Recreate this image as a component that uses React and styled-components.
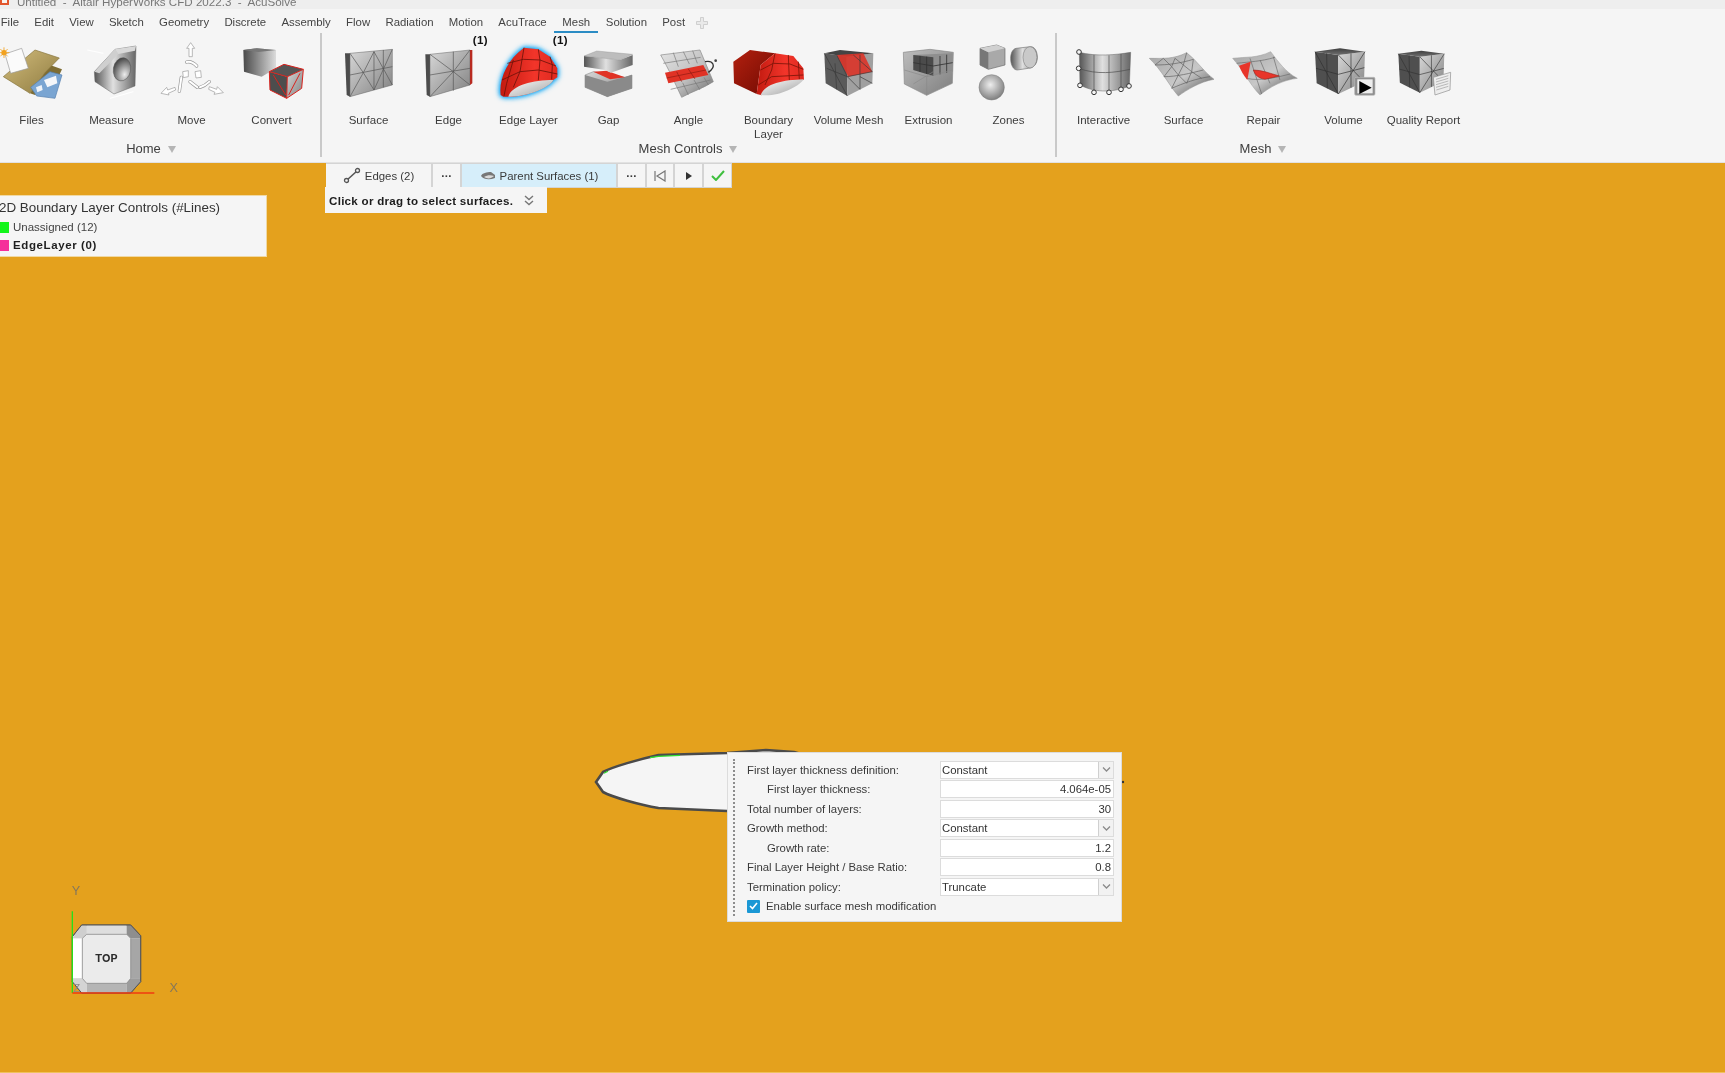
import React from 'react';
import styled, { createGlobalStyle } from 'styled-components';

const Global = createGlobalStyle`
  html, body { margin: 0; padding: 0; background: #f5f5f5; }
  body { font-family: "Liberation Sans", Arial, sans-serif; overflow: hidden; }
`;

const Page = styled.div`
  width: 1725px; height: 1073px; display: flex; flex-direction: column; overflow: hidden;
  filter: blur(0.45px);
`;
const TitleBar = styled.div`
  height: 9px; flex: none; background: #eeeeee; display: flex; align-items: flex-end; gap: 8px; overflow: hidden; color: #777;
  font-size: 11.6px; line-height: 14px;
`;
const TitleIcon = styled.span`
  width: 9px; height: 5px; flex: none; align-self: flex-start; background: #f8f2ee; border: 2px solid #e2562d; border-top: 0; box-sizing: border-box;
`;
const TitleText = styled.span` white-space: pre; `;
const MenuBar = styled.div`
  height: 24px; flex: none; display: flex; margin-left: -7px; background: #f5f5f5; color: #444; font-size: 11.4px;
`;
const MenuItem = styled.div`
  padding: 0 ${p => (p.$active ? 8 : 7.65)}px; height: 24px; box-sizing: border-box; line-height: 26px; white-space: nowrap;
  border-bottom: 2px solid ${p => (p.$active ? '#2b8cc4' : 'transparent')};
`;
const PlusIcon = styled.svg` width: 12px; height: 12px; margin: 8px 0 0 3px; `;
const Ribbon = styled.div`
  height: 130px; flex: none; box-sizing: border-box; background: #f5f5f5; display: flex; margin-left: -9px; border-bottom: 1px solid #e2e2e2;
`;
const Group = styled.div` display: flex; flex-direction: column; `;
const ToolRow = styled.div` display: flex; height: 105px; `;
const Tool = styled.div`
  position: relative; width: 80px; padding-top: 5px; box-sizing: border-box; display: flex; flex-direction: column; align-items: center;
`;
const IconSvg = styled.svg` width: 80px; height: 70px; display: block; overflow: visible; flex: none; `;
const ToolLabel = styled.div`
  margin-top: 5px; width: 80px; padding-left: 1px; box-sizing: border-box; text-align: center; font-size: 11.5px; line-height: 14px; color: #3c3c3c;
`;
const Badge = styled.div`
  position: absolute; top: 0; right: 0; font-size: 11.5px; font-weight: 700; line-height: 14px; color: #111; letter-spacing: .4px;
`;
const GroupLabel = styled.div`
  display: flex; justify-content: center; align-items: center; gap: 7px; height: 20px; font-size: 13px; color: #3d3d3d;
`;
const Tri = styled.span`
  width: 0; height: 0; border-left: 4.5px solid transparent; border-right: 4.5px solid transparent; border-top: 7px solid #b5b5b5; margin-top: 2px;
`;
const Sep = styled.div`
  width: 2px; height: 124px; background: #c9c9c9; flex: none; margin: 0 6px 0 ${p => p.$ml}px;
`;
const Canvas = styled.div`
  position: relative; flex: 1; background: #e4a11d; border-bottom: 1px solid #efc25e;
`;
const FlowBar = styled.div`
  position: absolute; left: 326px; top: 0; height: 24px; display: flex; gap: 2px; background: #d4d4d4; padding: 1px 1px 0 0;
`;
const FlowBtn = styled.div`
  width: ${p => p.$w}px; height: 23px; display: flex; align-items: center; justify-content: center; gap: ${p => p.$gap || 0}px;
  background: ${p => (p.$active ? '#d6eefa' : '#f5f5f5')}; color: #3a3a3a; font-size: 11.4px; white-space: nowrap;
`;
const Dots = styled.span` font-weight: 700; font-size: 11.5px; letter-spacing: .3px; line-height: 14px; margin-top: -5px; `;
const Hint = styled.div`
  position: absolute; left: 325px; top: 24px; width: 222px; height: 26px; box-sizing: border-box; padding-left: 4px; background: #f5f5f5;
  display: flex; align-items: center; gap: 11px; font-size: 11.6px; font-weight: 700; color: #1c1c1c; letter-spacing: .27px;
`;
const Legend = styled.div`
  position: absolute; left: 0; top: 32px; width: 267px; height: 62px; box-sizing: border-box; background: #f5f5f5; padding-top: 2px;
  color: #333; border: 1px solid #f0d9a4; border-left: 0;
`;
const LegendTitle = styled.div` font-size: 13.4px; line-height: 19px; margin-left: -1px; margin-bottom: 1px; white-space: nowrap; `;
const LegendRow = styled.div`
  display: flex; align-items: center; gap: 4px; height: 18px; font-size: 11.5px; font-weight: ${p => (p.$bold ? 700 : 400)}; color: ${p => (p.$bold ? '#1f1f1f' : '#444')};
  letter-spacing: ${p => (p.$bold ? '.6px' : '0')};
`;
const Swatch = styled.span` width: 9px; height: 11px; background: ${p => p.$c}; flex: none; `;
const Airfoil = styled.svg` position: absolute; left: 590px; top: 582px; width: 540px; height: 235px; `;
const Panel = styled.div`
  position: absolute; left: 727px; top: 589px; width: 395px; height: 170px; box-sizing: border-box; background: #f5f5f5; border: 1px solid #dcdcdc;
  padding: 7px 8px 0 19px; color: #3a3a3a; font-size: 11.35px;
`;
const Grip = styled.div`
  position: absolute; left: 5px; top: 6px; bottom: 5px; border-left: 2px dotted #8d8d8d;
`;
const FormGrid = styled.div`
  display: grid; grid-template-columns: 193px 174px; grid-auto-rows: 19.5px; align-items: center;
`;
const RowLabel = styled.div` padding-left: ${p => (p.$indent ? 20 : 0)}px; white-space: nowrap; `;
const Field = styled.div`
  height: 18px; box-sizing: border-box; background: #fff; border: 1px solid #dcdcdc; display: flex; align-items: center;
  justify-content: ${p => (p.$num ? 'flex-end' : 'space-between')}; padding: ${p => (p.$num ? '0 2px' : '0 0 0 1px')}; color: #333;
`;
const DropBtn = styled.div`
  width: 14px; height: 16px; background: #f2f2f2; border-left: 1px solid #d0d0d0; display: flex; align-items: center; justify-content: center;
`;
const CheckRow = styled.div` display: flex; align-items: center; gap: 6px; height: 19.5px; `;
const Check = styled.span`
  width: 13px; height: 13px; border-radius: 1px; background: #1b98d5; display: flex; align-items: center; justify-content: center;
`;
const NavCube = styled.svg` position: absolute; left: 40px; top: 707px; width: 160px; height: 130px; `;
const DefsSvg = styled.svg` position: absolute; width: 0; height: 0; `;
const GlowG = styled.g` filter: drop-shadow(0 0 8px #12a8f5) drop-shadow(0 0 7px #12a8f5); `;

const Defs = () => (
  <DefsSvg>
    <defs>
      <linearGradient id="hmetal" x1="0" y1="0" x2="1" y2="0"><stop offset="0" stopColor="#555555" /><stop offset=".45" stopColor="#e0e0e0" /><stop offset="1" stopColor="#666666" /></linearGradient>
      <linearGradient id="dark" x1="0" y1="0" x2="0" y2="1"><stop offset="0" stopColor="#3f3f3f" /><stop offset="1" stopColor="#707070" /></linearGradient>
      <linearGradient id="face" x1="0" y1="0" x2="1" y2="1"><stop offset="0" stopColor="#d8d8d8" /><stop offset="1" stopColor="#808080" /></linearGradient>
      <linearGradient id="box" x1="0" y1="0" x2="1" y2="1"><stop offset="0" stopColor="#bdbdbd" /><stop offset="1" stopColor="#7e7e7e" /></linearGradient>
      <linearGradient id="cube" x1="0" y1="0" x2="1" y2="0"><stop offset="0" stopColor="#4a4a4a" /><stop offset=".7" stopColor="#b0b0b0" /><stop offset="1" stopColor="#dcdcdc" /></linearGradient>
      <linearGradient id="red" x1="0" y1="0" x2="1" y2="0"><stop offset="0" stopColor="#c21a10" /><stop offset=".6" stopColor="#f2352a" /><stop offset="1" stopColor="#e02a20" /></linearGradient>
      <linearGradient id="dred" x1="0" y1="0" x2="1" y2="1"><stop offset="0" stopColor="#b3200f" /><stop offset="1" stopColor="#6f0a02" /></linearGradient>
      <linearGradient id="tan" x1="0" y1="0" x2="1" y2="1"><stop offset="0" stopColor="#d2bc7c" /><stop offset="1" stopColor="#8d7a3f" /></linearGradient>
      <linearGradient id="white" x1="0" y1="0" x2="1" y2="1"><stop offset="0" stopColor="#ffffff" /><stop offset="1" stopColor="#9e9e9e" /></linearGradient>
      <linearGradient id="sheet" x1="0" y1="0" x2="1" y2="1"><stop offset="0" stopColor="#e4e4e4" /><stop offset=".55" stopColor="#c0c0c0" /><stop offset="1" stopColor="#6a6a6a" /></linearGradient>
      <linearGradient id="wave" x1="0" y1="0" x2="1" y2="1"><stop offset="0" stopColor="#a6a6a6" /><stop offset=".55" stopColor="#c8c8c8" /><stop offset="1" stopColor="#4f4f4f" /></linearGradient>
      <radialGradient id="sphere" cx=".45" cy=".4" r=".7"><stop offset="0" stopColor="#eeeeee" /><stop offset="1" stopColor="#6d6d6d" /></radialGradient>
      <radialGradient id="hole" cx=".7" cy=".7" r=".8"><stop offset="0" stopColor="#ececec" /><stop offset="1" stopColor="#3a3a3a" /></radialGradient>
    </defs>
  </DefsSvg>
);

const Icon = ({ left, ox, oy, children }) => (
  <IconSvg viewBox={`${left} 38 80 70`}>
    <g transform={`translate(${ox} ${oy}) scale(.33333)`}>{children}</g>
  </IconSvg>
);

const L = ({ d, c = '#555', w = 2 }) => <path d={d} fill="none" stroke={c} strokeWidth={w} />;

const Files = () => (
  <Icon left={-9} ox={0} oy={30}>
    <path d="M90,190 L150,105 L186,118 L178,135 L105,195 Z" fill="#7f6d33" />
    <path d="M10,140 L105,60 L178,84 L135,128 L90,190 Z" fill="url(#tan)" stroke="#85733a" strokeWidth="2" />
    <path d="M92,172 L150,125 L186,135 L165,205 L110,198 Z" fill="#7aa5d2" stroke="#557fad" strokeWidth="2" />
    <path d="M132,150 L168,137 L172,160 L142,172 Z" fill="#f4f6f9" />
    <path d="M108,172 L125,165 L128,180 L112,187 Z" fill="#eef2f7" />
    <path d="M15,72 L65,55 L85,115 L32,130 Z" fill="#fbfbfb" stroke="#9a9a9a" strokeWidth="2" />
    <circle cx="12" cy="68" r="8" fill="#f2a11e" />
    <L d="M12,52 V84 M-4,68 H28 M1,57 L23,79 M23,57 L1,79" c="#f2a11e" w="2.5" />
  </Icon>
);
const Measure = () => (
  <Icon left={71} ox={0} oy={30}>
    <L d="M262,60 L310,70 M330,205 L400,185" c="#ffffff" w="3" />
    <path d="M283,125 L345,58 L408,48 L405,168 L342,192 L285,155 Z" fill="url(#hmetal)" stroke="#666" strokeWidth="1.5" />
    <path d="M345,58 L408,48 L405,62 L355,72 Z" fill="#d9d9d9" />
    <path d="M283,125 L345,58 L355,72 L298,130 Z" fill="#cfcfcf" />
    <ellipse cx="366" cy="118" rx="26" ry="35" fill="url(#hole)" stroke="#555" strokeWidth="1.5" transform="rotate(10 366 118)" />
  </Icon>
);
const Seg = ({ d }) => (
  <>
    <path d={d} fill="none" stroke="#9a9a9a" strokeWidth="10" strokeLinecap="round" />
    <path d={d} fill="none" stroke="#ffffff" strokeWidth="6" strokeLinecap="round" />
  </>
);
const Move = () => (
  <Icon left={151} ox={0} oy={30}>
    <path d="M572,38 L584,55 L577,55 L577,80 L567,80 L567,55 L560,55 Z" fill="#fff" stroke="#999" strokeWidth="2" />
    <path d="M483,190 L500,172 L503,180 L525,172 L527,180 L505,190 L507,195 Z" fill="#fff" stroke="#999" strokeWidth="2" />
    <path d="M670,188 L652,170 L650,178 L628,170 L626,178 L645,187 L642,193 Z" fill="#fff" stroke="#999" strokeWidth="2" />
    <Seg d="M560,96 Q575,92 590,108" />
    <Seg d="M544,142 L538,184" />
    <Seg d="M570,155 L592,172" />
    <Seg d="M600,172 Q615,168 628,155" />
    <path d="M548,125 L565,122 L565,140 L550,143 Z" fill="#fff" stroke="#999" strokeWidth="2" />
    <path d="M585,125 L602,122 L604,142 L588,144 Z" fill="#fff" stroke="#999" strokeWidth="2" />
  </Icon>
);
const Convert = () => (
  <Icon left={231} ox={0} oy={30}>
    <path d="M730,60 L770,55 L828,60 L828,115 L785,140 L732,125 Z" fill="url(#cube)" />
    <path d="M730,60 L770,55 L828,60 L775,66 Z" fill="#777" />
    <path d="M808,125 L862,140 L860,205 L810,180 Z" fill="#4d4d4d" />
    <path d="M862,140 L910,118 L905,175 L860,205 Z" fill="url(#face)" />
    <path d="M808,125 L852,103 L910,118 L862,140 Z" fill="#555" />
    <path d="M808,125 L852,103 L910,118 L905,175 L860,205 L810,180 Z M808,125 L862,140 L910,118 M862,140 L860,205 M820,135 L857,195 M866,195 L900,130" fill="none" stroke="#d9211c" strokeWidth="3" />
  </Icon>
);
const SurfaceC = () => (
  <Icon left={328} ox={320} oy={0}>
    <path d="M75,160 L90,160 L90,290 L80,285 Z" fill="#4c4c4c" />
    <path d="M90,160 L217,148 L217,255 L90,290 Z" fill="url(#face)" stroke="#666" strokeWidth="1.5" />
    <L d="M162,155 L162,270 M90,160 L130,218 L90,290 M130,218 L162,155 M130,218 L162,270 M90,225 L217,200 M162,155 L217,255 M162,270 L217,148 M190,150 L190,262" />
  </Icon>
);
const EdgeC = () => (
  <Icon left={408} ox={320} oy={0}>
    <path d="M316,163 L330,163 L330,290 L320,285 Z" fill="#4c4c4c" />
    <path d="M330,163 L450,150 L450,255 L330,290 Z" fill="url(#face)" stroke="#666" strokeWidth="1.5" />
    <path d="M450,150 L457,150 L457,250 L450,255 Z" fill="#b82a20" />
    <L d="M400,155 L400,272 M330,163 L400,215 L330,290 M450,150 L400,215 L450,255 M330,225 L450,205" />
  </Icon>
);
const EdgeLayer = () => (
  <Icon left={488} ox={320} oy={0}>
    <GlowG>
      <path d="M542,285 C536,240 560,180 612,143 L655,148 L690,170 L712,205 L712,232 L700,240 C690,260 620,292 565,290 L550,290 Z" fill="url(#red)" />
    </GlowG>
    <L d="M612,143 L600,215 L580,262 M655,148 L660,180 L655,240 M690,170 L697,195 L695,238 M562,190 L610,178 L660,180 L708,198 M546,240 L600,215 L655,210 L712,222 M580,180 L560,250 L552,288" c="#6e120a" w="2.5" />
    <path d="M565,290 C575,255 640,240 700,240 C690,262 620,292 565,290 Z" fill="url(#white)" />
  </Icon>
);
const Gap = () => (
  <Icon left={568} ox={320} oy={0}>
    <path d="M795,225 L820,215 L915,232 L936,225 L936,265 L862,290 L795,262 Z" fill="url(#face)" stroke="#777" strokeWidth="1.5" />
    <path d="M795,225 L862,245 L936,225 L936,265 L862,290 L795,262 Z" fill="#8a8a8a" />
    <path d="M820,215 L860,212 L915,232 L870,238 Z" fill="#e03225" />
    <path d="M792,168 L900,180 L938,165 L938,195 L890,212 L872,218 L855,210 L792,200 Z" fill="url(#hmetal)" />
    <path d="M792,168 L830,153 L938,163 L900,180 Z" fill="#bdbdbd" stroke="#888" strokeWidth="1" />
  </Icon>
);
const Angle = () => (
  <Icon left={648} ox={320} oy={0}>
    <path d="M1022,165 L1140,150 L1180,245 C1150,265 1115,275 1085,292 C1070,260 1045,205 1022,165 Z" fill="url(#sheet)" stroke="#888" strokeWidth="2" />
    <path d="M1035,218 L1150,195 L1165,225 L1045,250 Z" fill="#e03225" />
    <L d="M1030,190 L1142,172 M1052,268 L1172,240 M1060,158 L1075,200 M1090,155 L1108,192 M1118,152 L1132,190 M1088,248 L1105,285 M1122,240 L1140,270 M1152,232 L1165,255" c="#777" />
    <L d="M1040,234 L1158,210 M1070,215 L1085,245 M1105,207 L1125,237" c="#8d1a12" />
    <path d="M1155,185 C1178,180 1192,198 1165,217" fill="none" stroke="#333" strokeWidth="4" />
    <circle cx="1187" cy="182" r="4" fill="#444" />
  </Icon>
);
const BoundaryLayer = () => (
  <Icon left={728} ox={640} oy={20}>
    <path d="M280,125 L330,90 L405,100 L362,135 L350,222 L282,190 Z" fill="url(#dred)" />
    <path d="M362,135 L405,100 L460,108 L490,145 L492,180 C440,180 385,190 365,226 L350,222 Z" fill="url(#red)" />
    <L d="M405,100 L395,150 L375,195 M445,105 L448,180 M475,125 L478,178 M362,150 L400,130 L450,132 L490,148 M355,195 L395,170 L490,165" c="#7a1409" w="2.5" />
    <path d="M362,225 C375,190 430,180 492,178 C470,205 410,232 362,225 Z" fill="url(#white)" />
  </Icon>
);
const VolumeMesh = () => (
  <Icon left={808} ox={640} oy={20}>
    <path d="M553,100 L620,110 L622,228 L557,190 Z" fill="#5a5a5a" />
    <path d="M620,110 L700,100 L697,190 L622,228 Z" fill="#a0a0a0" />
    <path d="M553,100 L600,90 L700,100 L620,110 Z" fill="#444" />
    <path d="M590,105 L670,100 L697,155 L625,170 Z" fill="#d9352a" opacity=".92" />
    <L d="M560,145 L622,170 L697,155 M590,105 L622,170 M585,130 L590,208 M660,105 L660,208 M622,170 L660,208 M660,170 L697,190 M553,100 L622,228 M640,105 L697,155" c="#3a3a3a" />
  </Icon>
);
const Extrusion = () => (
  <Icon left={888} ox={640} oy={20}>
    <path d="M790,97 L870,88 L940,97 L937,190 L860,226 L793,192 Z" fill="url(#box)" stroke="#8a8a8a" strokeWidth="2" />
    <path d="M820,105 L938,100 L938,155 L880,168 L820,150 Z" fill="#8f8f8f" />
    <path d="M820,105 L880,112 L880,168 L820,150 Z" fill="#4b4b4b" />
    <L d="M820,128 L880,138 L938,128 M840,108 L840,156 M860,110 L860,162 M900,108 L900,163 M920,104 L920,158" c="#333" w="2.5" />
    <L d="M793,150 L860,170 L937,150 M860,170 L860,226 M820,192 L880,155" c="#8a8a8a" />
  </Icon>
);
const Zones = () => (
  <Icon left={968} ox={640} oy={20}>
    <path d="M1020,85 L1070,75 L1095,85 L1095,135 L1045,148 L1020,135 Z" fill="#a9a9a9" stroke="#6a6a6a" strokeWidth="2" />
    <path d="M1020,85 L1045,97 L1045,148 L1020,135 Z" fill="#777" />
    <path d="M1020,85 L1070,75 L1095,85 L1045,97 Z" fill="#d0d0d0" />
    <path d="M1128,85 L1172,80 C1185,80 1192,95 1192,112 C1192,132 1180,145 1165,145 L1132,150 C1120,150 1112,135 1112,115 C1112,100 1118,87 1128,85 Z" fill="url(#hmetal)" stroke="#777" strokeWidth="2" />
    <ellipse cx="1170" cy="112" rx="21" ry="32" fill="#c9c9c9" stroke="#888" strokeWidth="2" />
    <circle cx="1055" cy="202" r="38" fill="url(#sphere)" stroke="#777" strokeWidth="1.5" />
  </Icon>
);
const Interactive = () => (
  <Icon left={1063} ox={1040} oy={20}>
    <path d="M118,97 C170,110 225,105 272,97 L268,198 C230,215 170,222 120,195 Z" fill="url(#hmetal)" stroke="#666" strokeWidth="1.5" />
    <L d="M116,145 C170,165 225,158 270,148 M162,105 L162,217 M207,106 L207,217 M243,102 L243,208" c="#4a4a4a" />
    {[[117, 96], [116, 145], [120, 196], [162, 217], [207, 217], [243, 208], [267, 198]].map(([x, y]) => (
      <circle key={x + '-' + y} cx={x} cy={y} r="7" fill="#f5f5f5" stroke="#333" strokeWidth="3" />
    ))}
  </Icon>
);
const MeshSurface = () => (
  <Icon left={1143} ox={1040} oy={20}>
    <path d="M328,115 C370,115 400,118 440,98 C470,120 490,155 522,178 C480,185 440,210 415,228 C390,200 365,150 328,115 Z" fill="url(#wave)" stroke="#888" strokeWidth="1.5" />
    <L d="M345,135 C385,135 420,130 460,118 M372,170 C410,170 450,160 490,150 M395,205 C430,190 470,175 510,170 M370,115 L345,135 M370,115 L395,140 L372,170 M405,115 L395,140 M405,115 L430,135 M440,98 L430,135 L415,165 L395,205 M395,140 L415,165 L440,190 M430,135 L455,155 L440,190 M460,118 L455,155 L485,175" c="#5f5f5f" />
  </Icon>
);
const Repair = () => (
  <Icon left={1223} ox={1040} oy={20}>
    <path d="M578,115 C620,110 650,115 692,95 C715,125 735,155 772,175 C730,180 690,200 660,225 C630,195 610,150 578,115 Z" fill="url(#wave)" stroke="#999" strokeWidth="1.5" />
    <L d="M590,130 C630,125 660,125 705,112 M630,115 L665,222 M690,190 L660,120 M720,180 L700,110 M620,175 C660,185 720,170 750,162" c="#6a6a6a" />
    <path d="M597,137 L632,125 L622,180 C610,165 602,150 597,137 Z" fill="#e8352a" />
    <path d="M640,150 C665,150 690,160 718,168 L675,178 C655,175 645,165 640,150 Z" fill="#e8352a" stroke="#8f1a12" strokeWidth="1.5" />
  </Icon>
);
const CubeBody = ({ x = 825, y = 85, s = 1 }) => (
  <g transform={`translate(${x} ${y}) scale(${s})`}>
    <path d="M0,10 L70,20 L70,137 L5,105 Z" fill="#4f4f4f" />
    <path d="M70,20 L150,10 L147,100 L70,137 Z" fill="url(#face)" />
    <path d="M0,10 L75,0 L150,10 L70,20 Z" fill="url(#dark)" />
    <L d="M35,15 L37,120 M0,10 L70,137 M3,60 L70,78 L148,58 M108,15 L108,118 M70,20 L147,100 M70,137 L150,10" c="#2f2f2f" />
  </g>
);
const Volume = () => (
  <Icon left={1303} ox={1040} oy={20}>
    <CubeBody />
    <rect x="944" y="172" width="61" height="54" rx="4" fill="#8e8e8e" stroke="#bbb" strokeWidth="2" />
    <rect x="952" y="178" width="46" height="42" fill="#ededed" />
    <path d="M958,183 L995,203 L958,222 Z" fill="#000" />
  </Icon>
);
const Quality = () => (
  <Icon left={1383} ox={1040} oy={20}>
    <CubeBody x={1075} y={92} s={0.92} />
    <path d="M1180,172 L1232,157 L1230,210 L1185,225 Z" fill="#ededed" stroke="#8c8c8c" strokeWidth="2" />
    <L d="M1188,178 L1225,167 M1188,186 L1225,175 M1188,194 L1225,183 M1188,202 L1225,191 M1189,210 L1225,199" c="#888" w="1.6" />
  </Icon>
);

const groups = [
  {
    name: 'Home',
    tools: [['Files', Files], ['Measure', Measure], ['Move', Move], ['Convert', Convert]],
  },
  {
    name: 'Mesh Controls',
    tools: [
      ['Surface', SurfaceC], ['Edge', EdgeC, '(1)'], ['Edge Layer', EdgeLayer, '(1)'], ['Gap', Gap], ['Angle', Angle],
      ['Boundary Layer', BoundaryLayer], ['Volume Mesh', VolumeMesh], ['Extrusion', Extrusion], ['Zones', Zones],
    ],
  },
  {
    name: 'Mesh',
    tools: [['Interactive', Interactive], ['Surface', MeshSurface], ['Repair', Repair], ['Volume', Volume], ['Quality Report', Quality]],
  },
];

const menu = ['File', 'Edit', 'View', 'Sketch', 'Geometry', 'Discrete', 'Assembly', 'Flow', 'Radiation', 'Motion', 'AcuTrace', 'Mesh', 'Solution', 'Post'];

const RibbonGroup = ({ group }) => (
  <Group>
    <ToolRow>
      {group.tools.map(([label, Ic, badge]) => (
        <Tool key={label}>
          {badge && <Badge>{badge}</Badge>}
          <Ic />
          <ToolLabel>{label}</ToolLabel>
        </Tool>
      ))}
    </ToolRow>
    <GroupLabel>{group.name}<Tri /></GroupLabel>
  </Group>
);

const Chevron = () => (
  <svg width="9" height="7" viewBox="0 0 9 7"><path d="M1,1.5 L4.5,5 L8,1.5" fill="none" stroke="#8a8a8a" strokeWidth="1.3" /></svg>
);

const rows = [
  ['First layer thickness definition:', 'Constant', false, true],
  ['First layer thickness:', '4.064e-05', true, false],
  ['Total number of layers:', '30', false, false],
  ['Growth method:', 'Constant', false, true],
  ['Growth rate:', '1.2', true, false],
  ['Final Layer Height / Base Ratio:', '0.8', false, false],
  ['Termination policy:', 'Truncate', false, true],
];

export default function App() {
  return (
    <Page>
      <Global />
      <Defs />
      <TitleBar>
        <TitleIcon />
        <TitleText>Untitled  -  Altair HyperWorks CFD 2022.3  -  AcuSolve</TitleText>
      </TitleBar>
      <MenuBar>
        {menu.map(m => <MenuItem key={m} $active={m === 'Mesh'}>{m}</MenuItem>)}
        <PlusIcon viewBox="0 0 12 12"><path d="M4.5,0.5 H7.5 V4.5 H11.5 V7.5 H7.5 V11.5 H4.5 V7.5 H0.5 V4.5 H4.5 Z" fill="#e9e9e9" stroke="#cfcfcf" /></PlusIcon>
      </MenuBar>
      <Ribbon>
        <RibbonGroup group={groups[0]} />
        <Sep $ml={9} />
        <RibbonGroup group={groups[1]} />
        <Sep $ml={7} />
        <RibbonGroup group={groups[2]} />
      </Ribbon>
      <Canvas>
        <FlowBar>
          <FlowBtn $w={105} $gap={4}>
            <svg width="18" height="17" viewBox="0 0 18 17"><path d="M4,13 L14,4" stroke="#555" strokeWidth="1.6" /><circle cx="3.5" cy="13.5" r="2" fill="#f5f5f5" stroke="#555" strokeWidth="1.3" /><circle cx="14.5" cy="3.5" r="2" fill="#f5f5f5" stroke="#555" strokeWidth="1.3" /></svg>
            Edges (2)
          </FlowBtn>
          <FlowBtn $w={27}><Dots>...</Dots></FlowBtn>
          <FlowBtn $w={154} $gap={4} $active>
            <svg width="16" height="10" viewBox="0 0 16 10"><path d="M1,5 C2,2 7,1 11,1 L15,4 L15,7 C10,9 4,9 1,5 Z" fill="#777" /><path d="M4,6 C7,4 11,4 14,5 C11,8 7,8 4,6 Z" fill="#d9d9d9" /></svg>
            Parent Surfaces (1)
          </FlowBtn>
          <FlowBtn $w={27}><Dots>...</Dots></FlowBtn>
          <FlowBtn $w={26}>
            <svg width="12" height="12" viewBox="0 0 12 12"><path d="M1,1 V11 M11,1 L3,6 L11,11 Z" fill="none" stroke="#777" strokeWidth="1.2" /></svg>
          </FlowBtn>
          <FlowBtn $w={27}>
            <svg width="8" height="10" viewBox="0 0 8 10"><path d="M1,1 L7,5 L1,9 Z" fill="#333" /></svg>
          </FlowBtn>
          <FlowBtn $w={27}>
            <svg width="14" height="11" viewBox="0 0 14 11"><path d="M1,6 L5,10 L13,1" fill="none" stroke="#3fbf3f" strokeWidth="2" /></svg>
          </FlowBtn>
        </FlowBar>
        <Hint>
          Click or drag to select surfaces.
          <svg width="10" height="11" viewBox="0 0 10 11"><path d="M1,1 L5,4.5 L9,1 M1,6 L5,9.5 L9,6" fill="none" stroke="#777" strokeWidth="1.4" /></svg>
        </Hint>
        <Legend>
          <LegendTitle>2D Boundary Layer Controls (#Lines)</LegendTitle>
          <LegendRow><Swatch $c="#12f51a" />Unassigned (12)</LegendRow>
          <LegendRow $bold><Swatch $c="#f5309a" />EdgeLayer (0)</LegendRow>
        </Legend>
        <Airfoil viewBox="590 745 540 235">
          <path d="M596,782 L603,772 C612,767 640,759 658.5,755 L727,753 L766,750 L794,752 L860,770 L860,800 L727,811 L658.5,808 C640,805 612,797 603,792 Z" fill="#f5f5f5" stroke="#4a4a4a" strokeWidth="2.6" />
          <path d="M650,757.6 L658.5,756.3 L680,755.4 M604,773.2 L608,771.2" fill="none" stroke="#2fe02f" strokeWidth="1.2" />
          <circle cx="1123" cy="782" r="1.2" fill="#333" />
        </Airfoil>
        <Panel>
          <Grip />
          <FormGrid>
            {rows.map(([label, value, indent, drop]) => (
              <React.Fragment key={label}>
                <RowLabel $indent={indent}>{label}</RowLabel>
                <Field $num={!drop}>
                  {value}
                  {drop && <DropBtn><Chevron /></DropBtn>}
                </Field>
              </React.Fragment>
            ))}
          </FormGrid>
          <CheckRow>
            <Check>
              <svg width="9" height="8" viewBox="0 0 9 8"><path d="M1,4 L3.5,6.5 L8,1" fill="none" stroke="#fff" strokeWidth="1.6" /></svg>
            </Check>
            Enable surface mesh modification
          </CheckRow>
        </Panel>
        <NavCube viewBox="0 0 480 390">
          <path d="M97,200 L125,165 L272,165 L302,197 L302,335 L272,369 L125,369 L97,335 Z" fill="#e9e9e9" stroke="#555" strokeWidth="3" />
          <path d="M97,205 H127 V325 H97 Z" fill="#ffffff" />
          <path d="M272,205 H302 V325 H272 Z" fill="#a6a6a6" />
          <path d="M140,340 H260 V369 H140 Z" fill="#b5b5b5" />
          <path d="M140,165 H260 V193 H140 Z" fill="#dedede" />
          <path d="M125,165 L140,165 L140,193 L127,205 L97,205 Z" fill="#cfcfcf" />
          <path d="M260,165 L272,165 L302,197 L302,205 L272,205 L260,193 Z" fill="#8e8e8e" />
          <path d="M260,340 L272,325 L302,325 L302,335 L272,369 L260,369 Z" fill="#9c9c9c" />
          <path d="M127,325 L140,340 L140,369 L125,369 L97,335 L97,325 Z" fill="#d4d4d4" />
          <path d="M140,193 H260 L272,205 V325 L260,340 H140 L127,325 V205 Z" fill="#ebebeb" stroke="#777" strokeWidth="2" />
          <L d="M97,200 L125,165 L272,165 L302,197 L302,335 L272,369 L125,369 L97,335 Z" c="#555" w="3" />
          <path d="M97,124 V369" stroke="#26e01a" strokeWidth="4" />
          <path d="M97,369 H343" stroke="#f03a10" strokeWidth="4" />
          <text x="199" y="276" textAnchor="middle" fontFamily="Inter, sans-serif" fontWeight="700" fontSize="33" fill="#2c2c2c">TOP</text>
          <text x="108" y="74" textAnchor="middle" fontFamily="Liberation Sans, sans-serif" fontSize="38" fill="#86775a">Y</text>
          <text x="401" y="367" textAnchor="middle" fontFamily="Liberation Sans, sans-serif" fontSize="38" fill="#86775a">X</text>
          <text x="110" y="365" textAnchor="middle" fontFamily="Liberation Sans, sans-serif" fontSize="34" fill="#8a8a8a">Z</text>
        </NavCube>
      </Canvas>
    </Page>
  );
}
